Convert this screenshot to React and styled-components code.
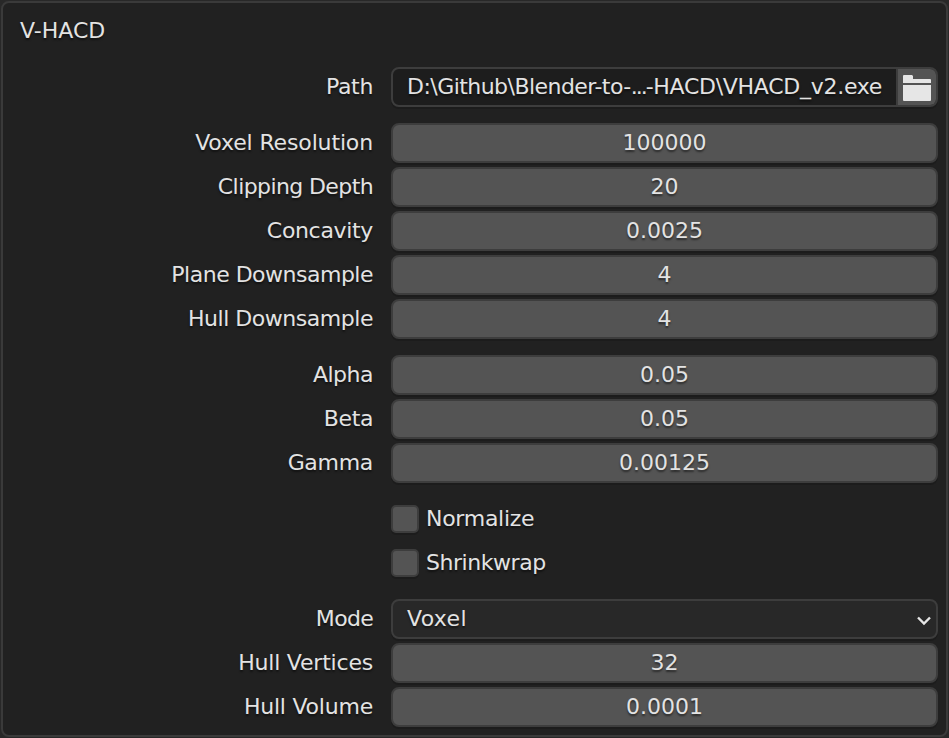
import React from "react";
import styled, { createGlobalStyle } from "styled-components";

const Global = createGlobalStyle`
  * { box-sizing: border-box; }
  body { margin: 0; background: #282828; overflow: hidden; }
`;
const Frame = styled.main`
  width: 949px; height: 738px; padding: 1px 1px 1px;
`;
const Panel = styled.section`
  height: 736px; padding: 9px 8px 0 17px;
  background: #212121; border: 2px solid #3a3a3a; border-radius: 8px;
  color: #e3e3e3; font: 22px/40px "DejaVu Sans", sans-serif;
  text-shadow: 0 2px 2px rgba(0,0,0,.5);
`;
const Title = styled.h1`
  margin: 0 0 17px; height: 38px; font: inherit; line-height: 38px;
`;
const Group = styled.div`
  display: grid; gap: 4px; margin-bottom: 16px;
`;
const Row = styled.div`
  display: grid; grid-template-columns: 353px 547px; column-gap: 18px; height: 40px;
`;
const Text = styled.span`
  letter-spacing: ${p => p.$track || 0}px; white-space: nowrap;
`;
const Label = styled(Text)`text-align: right;`;
const Field = styled.div`
  background: #545454; border: 2px solid #3d3d3d; border-radius: 8px;
  text-align: center; line-height: 36px; overflow: hidden; white-space: nowrap;
  box-shadow: 0 2px 0 #1c1c1c;
`;
const PathField = styled(Field)`
  display: flex; background: #1d1d1d; text-align: left; padding-left: 14px; justify-content: space-between;
`;
const Browse = styled.div`
  flex: 0 0 40px; background: #545454; border-left: 2px solid #3d3d3d; display: flex;
`;
const Select = styled(Field)`
  display: flex; justify-content: space-between; background: #282828; padding: 0 4px 0 14px;
`;
const Check = styled.div`
  grid-column: 2; display: flex; align-items: center; gap: 7px; line-height: 40px;
`;
const Box = styled.span`
  width: 28px; height: 28px; background: #545454; border: 2px solid #3d3d3d; border-radius: 5px;
  box-shadow: 0 2px 0 #1c1c1c;
`;
const Value = ({ label, value, track }) => <Row><Label $track={track}>{label}</Label><Field>{value}</Field></Row>;
const Toggle = ({ label, track }) => <Row><Check><Box /><Text $track={track}>{label}</Text></Check></Row>;

export default function App() {
  return <><Global /><Frame><Panel>
    <Title>V-HACD</Title>
    <Group><Row><Label $track={-.35}>Path</Label><PathField>
      <span><Text $track={-.54}>D:\Github\Blender-to-</Text><Text $track={-2}>...</Text><Text $track={-.28}>-HACD\VHACD_v2.exe</Text></span>
      <Browse><svg width="38" height="36" viewBox="0 0 38 36"><path fill="#e6e6e6" d="M6 6h8l1 1v3h17q1 0 1 1v3H5V7q0-1 1-1zM5 16h28v15q0 1-1 1H6q-1 0-1-1z" /></svg></Browse>
    </PathField></Row></Group>
    <Group>
      <Value label="Voxel Resolution" value="100000" track={-.14} />
      <Value label="Clipping Depth" value="20" track={-.6} />
      <Value label="Concavity" value="0.0025" track={-.33} />
      <Value label="Plane Downsample" value="4" track={-.5} />
      <Value label="Hull Downsample" value="4" track={-.47} />
    </Group>
    <Group>
      <Value label="Alpha" value="0.05" track={-.5} />
      <Value label="Beta" value="0.05" track={-.4} />
      <Value label="Gamma" value="0.00125" track={-.3} />
    </Group>
    <Group><Toggle label="Normalize" track={-.28} /><Toggle label="Shrinkwrap" track={-.45} /></Group>
    <Group>
      <Row><Label $track={-.7}>Mode</Label><Select><Text $track={.35}>Voxel</Text>
        <svg width="16" height="36" viewBox="0 0 16 36"><path fill="none" stroke="#e6e6e6" strokeWidth="2.4" d="M2 16.5l6 6 6-6" /></svg>
      </Select></Row>
      <Value label="Hull Vertices" value="32" track={-.2} />
      <Value label="Hull Volume" value="0.0001" track={-.22} />
    </Group>
  </Panel></Frame></>;
}
